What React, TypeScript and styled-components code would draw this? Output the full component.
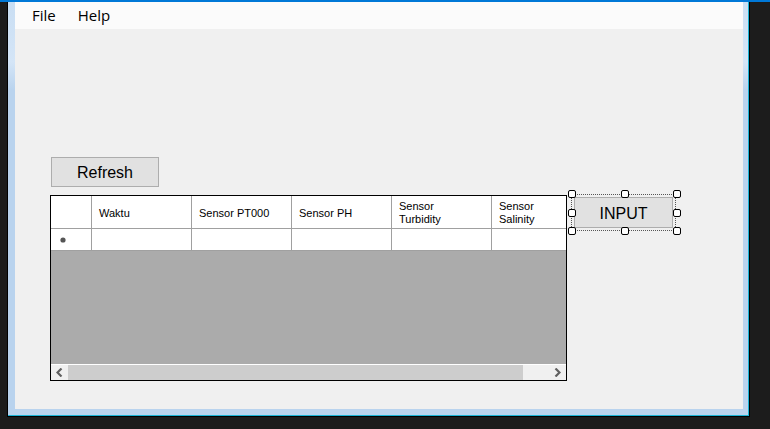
import styled, { createGlobalStyle } from "styled-components";

const GlobalStyle = createGlobalStyle`
  html, body {
    margin: 0;
    padding: 0;
    background: #1c1c1c;
  }
  #root {
    width: 770px;
    height: 429px;
    overflow: hidden;
  }
`;

const Screen = styled.div`
  width: 770px;
  height: 429px;
  background: #1c1c1c;
  border-top: 2px solid #0078d7;
  box-sizing: border-box;
  padding-left: 7px;
`;

const Frame = styled.div`
  width: 743px;
  height: 415px;
  box-sizing: border-box;
  border-left: 1px solid #000;
  border-right: 1px solid #000;
  border-bottom: 1px solid #000;
  display: flex;
`;

const Glass = styled.div`
  flex: 1;
  display: flex;
  box-sizing: border-box;
  border-right: 1px solid #1ab3d6;
  border-bottom: 1px solid #1ab3d6;
  padding: 0 5px 6px 7px;
  background: linear-gradient(to bottom, #c9def3 0px, #d4e5f7 60px, #b9d3ee 88px, #b9d3ee 100%);
`;

const Client = styled.div`
  flex: 1;
  background: #f0f0f0;
  display: flex;
  flex-direction: column;
`;

const MenuStrip = styled.div`
  height: 27px;
  background: #fbfbfb;
  display: flex;
  align-items: center;
  gap: 22px;
  padding-left: 17px;
  font-family: "Open Sans", "Noto Sans", sans-serif;
  font-size: 15px;
  color: #000;
`;

const MenuItem = styled.span`
  line-height: 27px;
`;

const Body = styled.div`
  padding: 128px 0 0 35px;
  display: flex;
  flex-direction: column;
  gap: 8px;
`;

const Button = styled.div<{ $w: number; $h: number }>`
  width: ${(p) => p.$w}px;
  height: ${(p) => p.$h}px;
  box-sizing: border-box;
  background: #e1e1e1;
  border: 1px solid #adadad;
  padding-top: 2px;
  display: flex;
  align-items: center;
  justify-content: center;
  font-family: "Liberation Sans", Arial, sans-serif;
  font-size: 16px;
  color: #000;
`;

const RefreshButton = styled(Button)`
  margin-left: 1px;
`;

const Row = styled.div`
  display: flex;
  align-items: flex-start;
  gap: 4px;
`;

const Grid = styled.div`
  width: 517px;
  height: 186px;
  box-sizing: border-box;
  border: 1px solid #000;
  display: flex;
  flex-direction: column;
  overflow: hidden;
  font-family: "Liberation Sans", Arial, sans-serif;
  font-size: 11px;
  color: #000;
`;

const GridRow = styled.div<{ $h: number }>`
  display: flex;
  height: ${(p) => p.$h}px;
  flex: none;
  background: #fff;
`;

const Cell = styled.div<{ $w: number }>`
  width: ${(p) => p.$w}px;
  flex: none;
  box-sizing: border-box;
  border-right: 1px solid #a0a0a0;
  border-bottom: 1px solid #a0a0a0;
  padding: 2px 0 0 7px;
  display: flex;
  align-items: center;
  line-height: 13px;
  background: #fff;
`;

const RowHead = styled(Cell)`
  justify-content: center;
  padding: 1px 17px 0 0;
`;

const Empty = styled.div`
  flex: 1;
  background: #ababab;
  border-bottom: 1px solid #fff;
`;

const HScroll = styled.div`
  height: 15px;
  flex: none;
  background: #f0f0f0;
  display: flex;
  align-items: stretch;
`;

const ArrowBtn = styled.div`
  width: 17px;
  display: flex;
  align-items: center;
  justify-content: center;
`;

const Track = styled.div`
  flex: 1;
  display: flex;
`;

const Thumb = styled.div`
  width: 455px;
  background: #cdcdcd;
`;

const Selection = styled.div`
  position: relative;
  margin-top: -1px;
  padding: 2px;
  border: 1px dotted #555;
`;

const Handle = styled.div`
  position: absolute;
  width: 6px;
  height: 6px;
  background: #fff;
  border: 1px solid #000;
  border-radius: 2px;
`;

const handles = [
  { left: -4, top: -5 },
  { left: 49, top: -5 },
  { left: 101, top: -5 },
  { left: -4, top: 14 },
  { left: 101, top: 14 },
  { left: -4, top: 32 },
  { left: 49, top: 32 },
  { left: 101, top: 32 },
];

const columns = ["Waktu", "Sensor PT000", "Sensor PH", "Sensor Turbidity", "Sensor Salinity"];

const Chevron = ({ dir }: { dir: "left" | "right" }) => (
  <svg width="7" height="9" viewBox="0 0 7 9">
    <path
      d={dir === "left" ? "M5.5 0.5 L1.5 4.5 L5.5 8.5" : "M1.5 0.5 L5.5 4.5 L1.5 8.5"}
      fill="none"
      stroke="#606060"
      strokeWidth="2.2"
    />
  </svg>
);

export default function App() {
  return (
    <>
      <GlobalStyle />
      <Screen>
        <Frame>
          <Glass>
            <Client>
              <MenuStrip>
                <MenuItem>File</MenuItem>
                <MenuItem>Help</MenuItem>
              </MenuStrip>
              <Body>
                <RefreshButton $w={108} $h={30}>Refresh</RefreshButton>
                <Row>
                  <Grid>
                    <GridRow $h={33}>
                      <RowHead $w={41} />
                      {columns.map((c) => (
                        <Cell key={c} $w={100}>
                          {c.startsWith("Sensor T") || c.startsWith("Sensor S") ? (
                            <span>
                              Sensor
                              <br />
                              {c.slice(7)}
                            </span>
                          ) : (
                            c
                          )}
                        </Cell>
                      ))}
                    </GridRow>
                    <GridRow $h={22}>
                      <RowHead $w={41}>
                        <svg width="6" height="6" viewBox="0 0 6 6">
                          <circle cx="3" cy="3" r="2.6" fill="#555" />
                        </svg>
                      </RowHead>
                      {columns.map((c) => (
                        <Cell key={c} $w={100} />
                      ))}
                    </GridRow>
                    <Empty />
                    <HScroll>
                      <ArrowBtn>
                        <Chevron dir="left" />
                      </ArrowBtn>
                      <Track>
                        <Thumb />
                      </Track>
                      <ArrowBtn>
                        <Chevron dir="right" />
                      </ArrowBtn>
                    </HScroll>
                  </Grid>
                  <Selection>
                    <Button $w={99} $h={31}>INPUT</Button>
                    {handles.map((h, i) => (
                      <Handle key={i} style={{ left: h.left, top: h.top }} />
                    ))}
                  </Selection>
                </Row>
              </Body>
            </Client>
          </Glass>
        </Frame>
      </Screen>
    </>
  );
}
